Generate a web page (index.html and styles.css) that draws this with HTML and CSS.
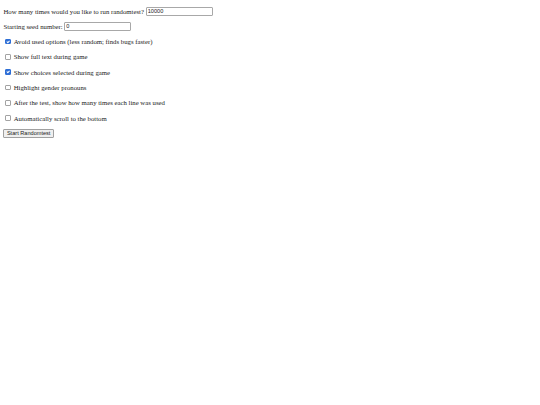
FILE: index.html
```html
<!DOCTYPE html>
<html>
<head>
<meta charset="utf-8">
<link rel="stylesheet" href="styles.css">
</head>
<body>
<div class="row"><label for="times">How many times would you like to run randomtest?</label><input id="times" class="field" type="text" value="10000"></div>
<div class="row"><label for="seed">Starting seed number:</label><input id="seed" class="field" type="text" value="0"></div>
<label class="row check"><input type="checkbox" checked><span>Avoid used options (less random; finds bugs faster)</span></label>
<label class="row check"><input type="checkbox"><span>Show full text during game</span></label>
<label class="row check"><input type="checkbox" checked><span>Show choices selected during game</span></label>
<label class="row check"><input type="checkbox"><span>Highlight gender pronouns</span></label>
<label class="row check"><input type="checkbox"><span>After the test, show how many times each line was used</span></label>
<label class="row check"><input type="checkbox"><span>Automatically scroll to the bottom</span></label>
<div class="row"><button class="start" type="button">Start Randomtest</button></div>
</body>
</html>
```
FILE: styles.css
```css
html {
  background: #ffffff;
}
body {
  margin: 3.4px;
  font-family: "Liberation Serif", "Times New Roman", serif;
  font-size: 6.75px;
  color: #1a1a1a;
}
.row {
  display: flex;
  align-items: center;
  height: 15.3px;
  gap: 1.7px;
}
.check input {
  -webkit-appearance: none;
  appearance: none;
  position: relative;
  box-sizing: border-box;
  flex: none;
  width: 5.6px;
  height: 5.6px;
  margin: 1.3px 1.3px 1.3px 1.7px;
  border: 1px solid #a3a3a3;
  border-radius: 1px;
  background: #ffffff;
}
.check input:checked {
  background: #2f6fd6;
  border-color: #2f6fd6;
}
.check input:checked::after {
  content: "";
  position: absolute;
  left: 0.9px;
  top: -0.2px;
  width: 1.2px;
  height: 2.4px;
  border-right: 1px solid #ffffff;
  border-bottom: 1px solid #ffffff;
  transform: rotate(45deg);
}
.field {
  box-sizing: border-box;
  width: 67px;
  height: 9px;
  margin: 0;
  padding: 0 1px;
  border: 1px solid #a8a8a8;
  border-radius: 1px;
  font-family: "Liberation Sans", Arial, sans-serif;
  font-size: 5.6px;
  color: #222222;
  background: #ffffff;
}
.start {
  box-sizing: border-box;
  height: 8.8px;
  margin: 0;
  padding: 0 2.5px;
  border: 1px solid #a0a0a0;
  border-radius: 1px;
  background: #efefef;
  font-family: "Liberation Sans", Arial, sans-serif;
  font-size: 5.6px;
  color: #222222;
}
```
